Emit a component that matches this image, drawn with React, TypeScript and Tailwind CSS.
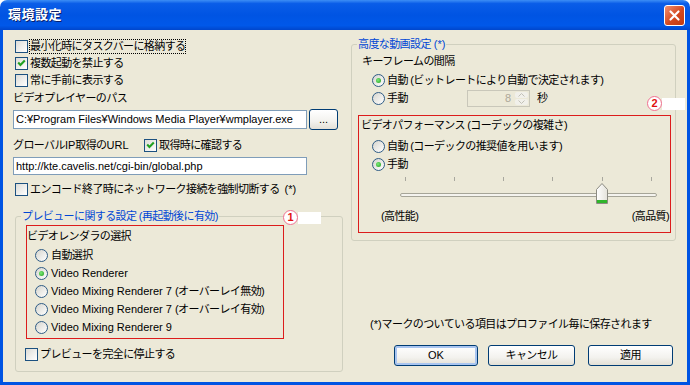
import React from "react";

// XP 風ダイアログ「環境設定」
const FONT = "font-['Liberation_Sans','Noto_Sans_CJK_JP',sans-serif]";

function J({ children, className = "" }: { children: React.ReactNode; className?: string }) {
  return <span className={`tracking-[-0.6px] ${className}`}>{children}</span>;
}

function Check({ checked }: { checked?: boolean }) {
  return (
    <span className="relative inline-block size-[13px] shrink-0 border border-[#1C5180] bg-[linear-gradient(135deg,#DCDCD7,#FFFFFF)]">
      {checked && (
        <svg viewBox="0 0 11 11" className="absolute left-0 top-0 size-[11px]">
          <path d="M2.2 4.6 L4.4 6.9 L8.8 2.4" stroke="#21A121" strokeWidth="2.1" fill="none" />
        </svg>
      )}
    </span>
  );
}

function Radio({ checked }: { checked?: boolean }) {
  return (
    <span className="flex size-[13px] shrink-0 items-center justify-center rounded-full border border-[#2F5C86] bg-[linear-gradient(135deg,#D6D5CE,#FFFFFF)]">
      {checked && <span className="size-[5px] rounded-full bg-[radial-gradient(circle_at_40%_40%,#7CEB78,#1F9A1B)]" />}
    </span>
  );
}

function CheckRow({ checked, children, className = "" }: { checked?: boolean; children: React.ReactNode; className?: string }) {
  return (
    <div className={`flex h-[17px] items-center gap-[2px] ${className}`}>
      <Check checked={checked} />
      {children}
    </div>
  );
}

function RadioRow({ checked, children, className = "" }: { checked?: boolean; children: React.ReactNode; className?: string }) {
  return (
    <div className={`flex h-[18px] items-center gap-[3px] ${className}`}>
      <Radio checked={checked} />
      {children}
    </div>
  );
}

function Btn({ children, className = "" }: { children: React.ReactNode; className?: string }) {
  return (
    <div
      className={`flex h-[21px] items-center justify-center rounded-[3px] border border-[#003C74] bg-[linear-gradient(180deg,#FFFFFF,#F3F2EE_60%,#E3E0D6)] ${className}`}
    >
      {children}
    </div>
  );
}

function Marker({ n }: { n: string }) {
  return (
    <div className="flex items-center">
      <span className="flex size-[15px] items-center justify-center rounded-full border-[1.5px] border-[#F07090] bg-white text-[11px] font-bold leading-none text-[#E01010]">
        {n}
      </span>
      <span className="h-[12px] w-[23px] bg-white" />
    </div>
  );
}

function Slider() {
  const ticks = [46, 95, 144, 193, 243, 292];
  return (
    <svg width="311" height="33" className="block">
      {ticks.map((x) => (
        <line key={x} x1={x + 0.5} y1="4" x2={x + 0.5} y2="8" stroke="#A8A79E" />
      ))}
      <rect x="41.5" y="20.5" width="256" height="3" rx="1.5" fill="#F4F3EE" stroke="#A6A598" />
      <defs>
        <linearGradient id="th" x1="0" y1="0" x2="1" y2="0">
          <stop offset="0" stopColor="#FFFFFF" />
          <stop offset="1" stopColor="#E4E2DA" />
        </linearGradient>
      </defs>
      <path d="M237.5 16.5 L243 10.5 L248.5 16.5 V30.5 H237.5 Z" fill="url(#th)" stroke="#8C8B82" />
      <rect x="238" y="27" width="10" height="3" fill="#2FB52A" />
    </svg>
  );
}

export default function App() {
  return (
    <div className={`${FONT} flex h-[385px] w-[690px] flex-col bg-white text-[11px] text-black`}>
      <div className="flex h-[30px] shrink-0 items-center justify-between rounded-t-[7px] bg-[linear-gradient(180deg,#3D8EF5_0%,#0A5DE8_12%,#0054E3_50%,#0058E9_85%,#0046CC_100%)] pl-[8px] pr-[5px]">
        <span className="text-[13px] font-bold tracking-[0.5px] text-white [text-shadow:1px_1px_#0A1E6A]">環境設定</span>
        <span className="flex size-[21px] items-center justify-center rounded-[3px] border border-white bg-[linear-gradient(135deg,#F09070,#D4481F_55%,#C23A10)]">
          <svg viewBox="0 0 13 13" className="size-[13px]">
            <path d="M2.5 2.5 L10.5 10.5 M10.5 2.5 L2.5 10.5" stroke="white" strokeWidth="2.2" strokeLinecap="round" />
          </svg>
        </span>
      </div>

      <div className="flex flex-1 bg-[#0054E3] px-[3px] pb-[3px]">
        <div className="flex flex-1 bg-[#ECE9D8]">
          {/* 左列 */}
          <div className="flex w-[340px] flex-col pl-[10px] pt-[8px]">
            <CheckRow className="ml-[2px]">
              <J className="ml-[-1px] border border-dotted border-black px-[0px] leading-[13px]">最小化時にタスクバーに格納する</J>
            </CheckRow>
            <CheckRow checked className="ml-[2px]">
              <J>複数起動を禁止する</J>
            </CheckRow>
            <CheckRow className="ml-[2px]">
              <J>常に手前に表示する</J>
            </CheckRow>
            <div className="mt-[1px] h-[17px] leading-[17px]">
              <J>ビデオプレイヤーのパス</J>
            </div>
            <div className="mt-[2px] flex items-center gap-[2px]">
              <div className="flex h-[19px] w-[294px] items-center border border-[#7F9DB9] bg-white pl-[2px]">
                C:¥Program Files¥Windows Media Player¥wmplayer.exe
              </div>
              <Btn className="h-[17px] w-[29px]">...</Btn>
            </div>
            <div className="mt-[7px] flex h-[17px] items-center">
              <span className="w-[131px]">
                <J>グローバル</J>IP<J>取得の</J>URL
              </span>
              <Check checked />
              <J className="ml-[2px]">取得時に確認する</J>
            </div>
            <div className="mt-[3px] flex h-[18px] w-[294px] items-center border border-[#7F9DB9] bg-white pl-[2px]">
              http://kte.cavelis.net/cgi-bin/global.php
            </div>
            <CheckRow className="ml-[2px] mt-[6px]">
              <J>エンコード終了時にネットワーク接続を強制切断する</J>
              <span className="ml-[3px]">(*)</span>
            </CheckRow>

            <div className="relative ml-[2px] mt-[12px] w-[328px]">
              <fieldset className="rounded-[3px] border border-[#D0D0BF] pb-[8px]">
                <legend className="ml-[5px] px-[1px] leading-[13px] text-[#0046D5]">
                  <J>プレビューに関する設定 (再起動後に有効)</J>
                </legend>
                <div className="ml-[10px] mt-[2px] w-[258px] border border-[#DC1C1C] pb-[2px] pt-[2px]">
                  <div className="h-[17px] leading-[17px]">
                    <J>ビデオレンダラの選択</J>
                  </div>
                  <div className="mt-[1px] flex flex-col pl-[8px]">
                    <RadioRow>
                      <J>自動選択</J>
                    </RadioRow>
                    <RadioRow checked>Video Renderer</RadioRow>
                    <RadioRow>
                      <span>
                        Video Mixing Renderer 7 <J>(オーバーレイ無効)</J>
                      </span>
                    </RadioRow>
                    <RadioRow>
                      <span>
                        Video Mixing Renderer 7 <J>(オーバーレイ有効)</J>
                      </span>
                    </RadioRow>
                    <RadioRow>Video Mixing Renderer 9</RadioRow>
                  </div>
                </div>
                <CheckRow className="ml-[9px] mt-[7px]">
                  <J>プレビューを完全に停止する</J>
                </CheckRow>
              </fieldset>
              <div className="absolute left-[268px] top-0">
                <Marker n="1" />
              </div>
            </div>
          </div>

          {/* 右列 */}
          <div className="ml-[8px] flex w-[325px] flex-col pt-[8px]">
            <div className="relative">
              <fieldset className="rounded-[3px] border border-[#D0D0BF] pb-[7px]">
                <legend className="ml-[5px] px-[1px] leading-[13px] text-[#0046D5]">
                  <J>高度な動画設定</J> (*)
                </legend>
                <div className="mt-[2px] h-[17px] pl-[10px] leading-[17px]">
                  <J>キーフレームの間隔</J>
                </div>
                <RadioRow checked className="mt-[1px] pl-[20px] !gap-[2px]">
                  <J>自動 (ビットレートにより自動で決定されます)</J>
                </RadioRow>
                <div className="flex h-[18px] items-center pl-[20px]">
                  <div className="flex w-[95px] items-center gap-[2px]">
                    <Radio />
                    <J>手動</J>
                  </div>
                  <div className="flex h-[17px] w-[63px] border border-[#C9C7BA] bg-[#ECE9D8]">
                    <span className="flex-1 pr-[3px] text-right leading-[15px] text-[#ACA899]">8</span>
                    <span className="flex w-[15px] flex-col gap-[1px] p-[1px]">
                      <span className="flex flex-1 items-center justify-center rounded-[2px] bg-[#F1F0EA]">
                        <svg width="7" height="4">
                          <path d="M0.5 3.5 L3.5 0.5 L6.5 3.5" stroke="#C2C1B8" fill="none" />
                        </svg>
                      </span>
                      <span className="flex flex-1 items-center justify-center rounded-[2px] bg-[#F1F0EA]">
                        <svg width="7" height="4">
                          <path d="M0.5 0.5 L3.5 3.5 L6.5 0.5" stroke="#C2C1B8" fill="none" />
                        </svg>
                      </span>
                    </span>
                  </div>
                  <J className="ml-[7px]">秒</J>
                </div>
                <div className="ml-[6px] mt-[8px] w-[313px] border border-[#DC1C1C] pb-[7px]">
                  <div className="mt-[1px] h-[17px] pl-[2px] leading-[17px]">
                    <J>ビデオパフォーマンス (コーデックの複雑さ)</J>
                  </div>
                  <div className="mt-[3px] flex flex-col pl-[13px]">
                    <RadioRow className="!gap-[2px]">
                      <J>自動 (コーデックの推奨値を用います)</J>
                    </RadioRow>
                    <RadioRow checked className="!gap-[2px]">
                      <J>手動</J>
                    </RadioRow>
                  </div>
                  <Slider />
                  <div className="mt-[2px] flex h-[17px] items-center justify-between pl-[22px] pr-[1px]">
                    <J>(高性能)</J>
                    <J>(高品質)</J>
                  </div>
                </div>
              </fieldset>
              <div className="absolute left-[296px] top-[58px]">
                <Marker n="2" />
              </div>
            </div>

            <div className="mt-[75px] h-[17px] pl-[19px] leading-[17px]">
              (*)<J>マークのついている項目はプロファイル毎に保存されます</J>
            </div>
            <div className="mt-[12px] flex pl-[43px]">
              <Btn className="w-[84px] shadow-[inset_0_0_0_2px_#A9C5F0]">OK</Btn>
              <Btn className="ml-[10px] w-[87px]">
                <J>キャンセル</J>
              </Btn>
              <Btn className="ml-[13px] w-[85px]">
                <J>適用</J>
              </Btn>
            </div>
          </div>
        </div>
      </div>
    </div>
  );
}
